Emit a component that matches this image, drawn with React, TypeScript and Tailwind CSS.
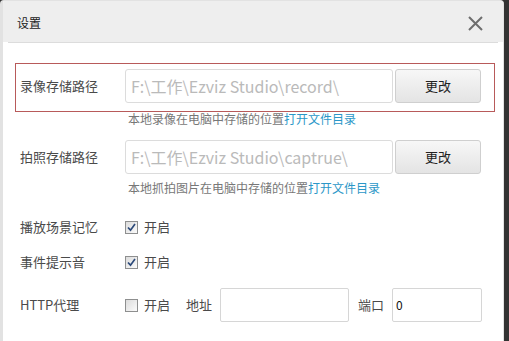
import React from "react";

const font = { fontFamily: '"Noto Sans CJK SC", "Noto Sans", sans-serif' };

function Check({ checked }: { checked: boolean }) {
  return (
    <span className="flex h-[13px] w-[13px] items-center justify-center border border-[#8e8f8f] bg-gradient-to-br from-[#dcdcdc] to-[#fbfbfb]">
      {checked && (
        <svg width="9" height="9" viewBox="0 0 9 9">
          <path d="M1 4.5 L3.5 7.2 L8 1" fill="none" stroke="#2c4a7a" strokeWidth="1.7" />
        </svg>
      )}
    </span>
  );
}

function PathRow({ label, value, hint, highlight, mt, hintMt }: { label: string; value: string; hint: string; highlight?: boolean; mt: string; hintMt: string }) {
  return (
    <div className={mt}>
      <div className={`flex items-center border pt-[5px] pb-[8px] ${highlight ? "border-[#b85a5a]" : "border-transparent"}`}>
        <div className="w-[109px] pl-[4px] text-[13px] text-[#4a4a4a]">{label}</div>
        <div className="flex h-[34px] w-[268px] items-center rounded-[3px] border border-[#dcdcdc] bg-white pl-[5px] text-[16px] text-[#bababa]">
          {value}
        </div>
        <div className="ml-[2px] flex h-[34px] w-[86px] items-center justify-center rounded-[3px] border border-[#cfcfcf] bg-gradient-to-b from-[#f7f7f7] to-[#e4e4e4] text-[13px] text-[#222]">
          更改
        </div>
      </div>
      <div className={`${hintMt} pl-[113px] text-[12px] leading-[13px] text-[#777]`}>
        {hint}
        <span className="text-[#2b97c8]">打开文件目录</span>
      </div>
    </div>
  );
}

export default function App() {
  return (
    <div className="flex h-[341px] w-[509px] bg-[#333]" style={font}>
      <div className="flex h-full w-[504px] flex-col overflow-hidden rounded-t-[4px] border-l-[3px] border-r border-t border-[#e2e2e2] bg-white">
        <div className="flex h-[41px] shrink-0 items-center justify-between bg-[#eeeeee] pl-[14px] pr-[20px] pt-[3px]">
          <span className="text-[12px] text-[#222]">设置</span>
          <svg width="15" height="15" viewBox="0 0 15 15">
            <path d="M1 1 L14 14 M14 1 L1 14" stroke="#6e6e6e" strokeWidth="2" />
          </svg>
        </div>
        <div className="mx-[5px] h-px bg-[#dcdcdc]" />
        <div className="flex flex-col pl-[12px] pr-[8px]">
          <PathRow label="录像存储路径" value="F:\工作\Ezviz Studio\record\" hint="本地录像在电脑中存储的位置" highlight mt="mt-[20px]" hintMt="mt-0" />
          <PathRow label="拍照存储路径" value="F:\工作\Ezviz Studio\captrue\" hint="本地抓拍图片在电脑中存储的位置" mt="mt-[9px]" hintMt="-mt-[2px]" />
          <div className="mt-[21px] flex h-[24px] items-center">
            <div className="w-[110px] pl-[5px] text-[13px] text-[#4a4a4a]">播放场景记忆</div>
            <Check checked />
            <span className="ml-[6px] text-[13px] text-[#4a4a4a]">开启</span>
          </div>
          <div className="mt-[11px] flex h-[24px] items-center">
            <div className="w-[110px] pl-[5px] text-[13px] text-[#4a4a4a]">事件提示音</div>
            <Check checked />
            <span className="ml-[6px] text-[13px] text-[#4a4a4a]">开启</span>
          </div>
          <div className="mt-[14px] flex h-[34px] items-center">
            <div className="w-[110px] pl-[5px] text-[13px] text-[#4a4a4a]">HTTP代理</div>
            <Check checked={false} />
            <span className="ml-[6px] text-[13px] text-[#4a4a4a]">开启</span>
            <span className="ml-[16px] text-[13px] text-[#4a4a4a]">地址</span>
            <div className="ml-[8px] h-[34px] w-[129px] rounded-[2px] border border-[#d6d6d6]" />
            <span className="ml-[9px] text-[13px] text-[#4a4a4a]">端口</span>
            <div className="ml-[8px] flex h-[34px] w-[90px] items-center rounded-[2px] border border-[#d6d6d6] pl-[3px] text-[12px] text-[#111]">0</div>
          </div>
        </div>
      </div>
    </div>
  );
}
